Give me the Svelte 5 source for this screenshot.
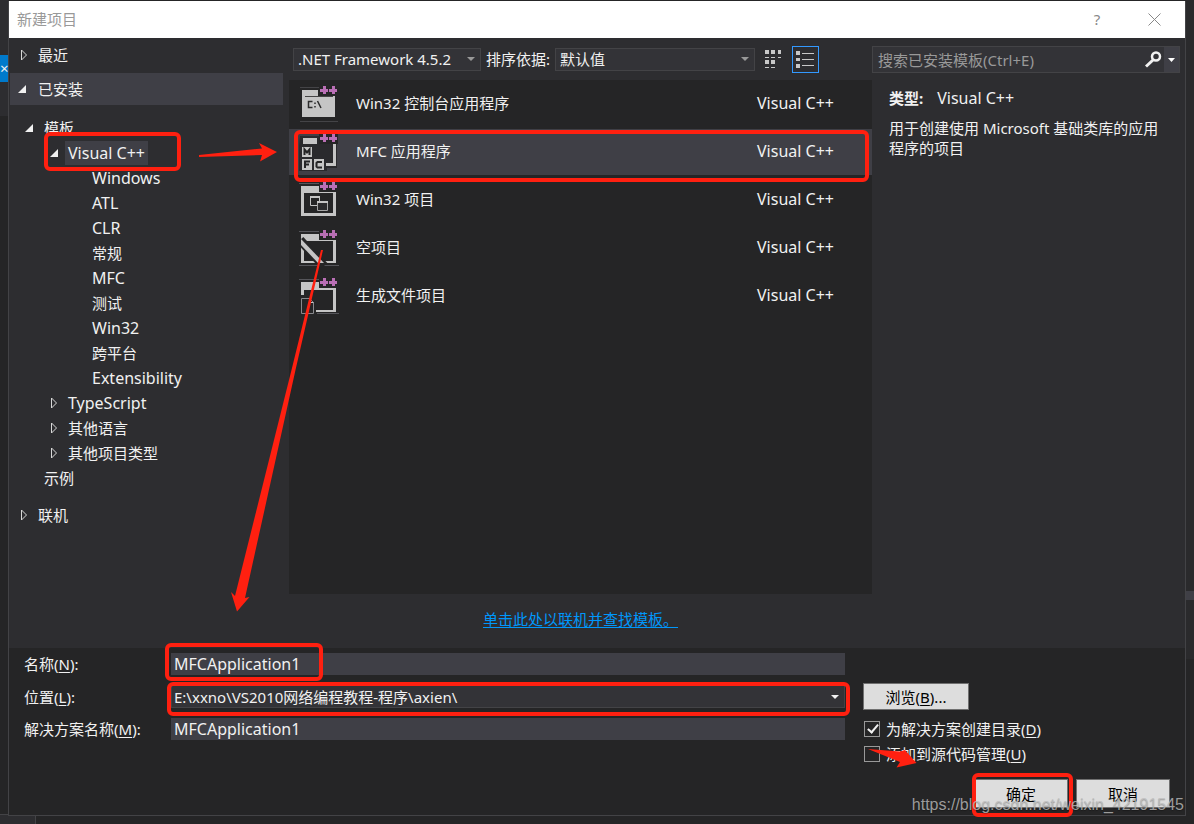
<script>
  const templates = [
    { name: 'Win32 控制台应用程序', icon: 'console' },
    { name: 'MFC 应用程序', icon: 'mfc' },
    { name: 'Win32 项目', icon: 'win32' },
    { name: '空项目', icon: 'empty' },
    { name: '生成文件项目', icon: 'makefile' },
  ];
  const languages = ['Windows', 'ATL', 'CLR', '常规', 'MFC', '测试', 'Win32', '跨平台', 'Extensibility'];
  const others = ['TypeScript', '其他语言', '其他项目类型'];
  const isLatin = (text) => /^[A-Za-z]/.test(text);
  let selected = $state(1);
  let name = $state('MFCApplication1');
  let solution = $state('MFCApplication1');
</script>

{#snippet closed()}
  <svg width="8" height="12" viewBox="0 0 8 12"><path d="M1.500 1v10L6.500 6z" fill="none" stroke="#d8d8d8" /></svg>
{/snippet}
{#snippet opened()}
  <svg width="8" height="12" viewBox="0 0 8 12"><path d="M8 2v8H0z" fill="#f1f1f1" /></svg>
{/snippet}
{#snippet plus()}
  <path d="M20 1h19v11H20z" fill="#252526" />
  <path d="M24 2h3v3h2v3h-2v2h-3V8h-3V5h3zM33 2h3v3h2v3h-2v2h-3V8h-3V5h3z" fill="#b96fb5" />
{/snippet}

<div class="desktop">
  <div class="back-left"><span class="tab">×</span></div>
  <div class="back-right"><span class="bar"></span></div>
  <div class="back-bottom"></div>

  <main class="dialog">
    <header class="title">
      <h1>新建项目</h1>
      <button class="tool help" aria-label="帮助">?</button>
      <button class="tool" aria-label="关闭">
        <svg width="13" height="13" viewBox="0 0 13 13"><path d="M.5.5l12 12M12.500.5l-12 12" stroke="#888" fill="none" /></svg>
      </button>
    </header>

    <section class="upper">
      <nav class="side">
        <button class="group">{@render closed()}最近</button>
        <button class="group on">{@render opened()}已安装</button>
        <ul class="tree">
          <li><button class="n1">{@render opened()}模板</button></li>
          <li><button class="n2">{@render opened()}<span class="picked latin">Visual C++</span></button></li>
          {#each languages as l}
            <li><button class="n3" class:latin={isLatin(l)}>{l}</button></li>
          {/each}
          {#each others as o}
            <li><button class="n2">{@render closed()}<span class:latin={isLatin(o)}>{o}</span></button></li>
          {/each}
          <li><button class="n1 leaf">示例</button></li>
        </ul>
        <button class="group">{@render closed()}联机</button>
      </nav>

      <div class="middle">
        <div class="toolbar">
          <span class="combo framework">
            <select aria-label="框架版本"><option>.NET Framework 4.5.2</option></select>
            <svg width="8" height="4" viewBox="0 0 8 4"><path d="M0 0h8L4 4z" fill="#999" /></svg>
          </span>
          <label for="sort">排序依据:</label>
          <span class="combo sort">
            <select id="sort"><option>默认值</option></select>
            <svg width="8" height="4" viewBox="0 0 8 4"><path d="M0 0h8L4 4z" fill="#999" /></svg>
          </span>
          <button class="view" aria-label="小图标">
            <svg width="17" height="19" viewBox="0 0 17 19" fill="#c8c8c8">
              <path d="M0 0h4v4H0zM6 0h4v4H6zM13 0h3v4h-3zM0 10h4v4H0zM6 10h4v4H6zM0 7h4v1H0zM6 7h4v1H6zM13 7h3v1h-3zM0 17h4v1H0zM6 17h4v1H6z" />
            </svg>
          </button>
          <button class="view active" aria-label="中等图标">
            <svg width="19" height="17" viewBox="0 0 19 17" fill="#c8c8c8">
              <path d="M0 0h4v4H0zM0 7h4v3H0zM0 13h4v4H0zM6 2h12v1H6zM6 8h12v1H6zM6 14h12v1H6z" />
            </svg>
          </button>
        </div>

        <ul class="list">
          {#each templates as t, i}
            <li>
              <button class="item" class:sel={selected === i} onclick={() => (selected = i)}>
                <svg class="ico" width="40" height="40" viewBox="0 0 40 40">
                  {#if t.icon === 'console'}
                    <path d="M1 3.500h20M1 37.500h38" stroke="#444447" />
                    <path d="M3 6h16v6h17v21H3z" fill="#c5c5c5" />
                    <path d="M6 12.500h28" stroke="#444" />
                    <path d="M13.500 17.500H9.500v6h4M16 18.500v1.500M16 22v1.500M18.500 17l3.500 7" fill="none" stroke="#2b2b2b" stroke-width="1.500" />
                  {:else if t.icon === 'mfc'}
                    <path d="M1 4h37v32H28v3H0V14z" fill="#2a2a2d" />
                    <path d="M4 6h14v6H4z" fill="#c5c5c5" />
                    <path d="M34 12h3v22H27v-3h7z" fill="#c5c5c5" />
                    <path d="M3 15h10v10H3zM3 27h10v11H3zM15 27h10v11H15z" fill="#c5c5c5" />
                    <path d="M5.500 23v-5.500L8 20.500l2.500-3V23M6 36v-6.500h5M6 32.500h4M23 30h-4.500l-1 1v3.500l1 1H23" fill="none" stroke="#252526" stroke-width="2" />
                  {:else if t.icon === 'win32'}
                    <path d="M0 3.500h20" stroke="#55555a" />
                    <path d="M2 6h18v6h17v24H2zM5 13v20h29V13z" fill="#c5c5c5" fill-rule="evenodd" />
                    <path d="M11.500 17.500h9v8h-9z" fill="none" stroke="#c5c5c5" />
                    <path d="M11 16h10v2H11z" fill="#c5c5c5" />
                    <path d="M18.500 21.500h10v9h-10z" fill="#2b2b2d" stroke="#a5a5a5" />
                    <path d="M18 21h11v2H18z" fill="#c5c5c5" />
                  {:else if t.icon === 'empty'}
                    <path d="M0 3.500h20M0 37.500h40" stroke="#55555a" />
                    <path d="M2 6h18v6h17v23H2zM5 13v20h29V13z" fill="#c5c5c5" fill-rule="evenodd" />
                    <path d="M1 12l24 26" stroke="#252526" stroke-width="9" />
                    <path d="M2 11v6l17 18h6z" fill="#c5c5c5" />
                  {:else}
                    <path d="M0 3.500h20M18 37.500h22" stroke="#55555a" />
                    <path d="M2 6h18v6h17v24H17v-2h17V14H5v5H2z" fill="#c5c5c5" />
                    <path d="M2.500 22.500h8l4 4v11h-12z" fill="#252526" stroke="#88888c" />
                    <path d="M10.500 22.500v4h4" fill="none" stroke="#c5c5c5" />
                  {/if}
                  {@render plus()}
                </svg>
                <span class="label">{t.name}</span>
                <span class="lang latin">Visual C++</span>
              </button>
            </li>
          {/each}
        </ul>
        <p class="online"><a href="#online">单击此处以联机并查找模板。</a></p>
      </div>

      <aside class="details">
        <div class="search">
          <input type="text" aria-label="搜索" placeholder="搜索已安装模板(Ctrl+E)" />
          <button class="find" aria-label="开始搜索">
            <svg width="17" height="17" viewBox="0 0 17 17"><circle cx="11" cy="5.500" r="4" fill="none" stroke="#f1f1f1" stroke-width="2.500" /><path d="M8 9l-7 6.500" stroke="#f1f1f1" stroke-width="3" /></svg>
          </button>
          <button class="drop" aria-label="搜索选项">
            <svg width="7" height="4" viewBox="0 0 7 4"><path d="M0 0h7L3.500 4z" fill="#fff" /></svg>
          </button>
        </div>
        <p><strong>类型:</strong><span class="latin">Visual C++</span></p>
        <p>用于创建使用 Microsoft 基础类库的应用程序的项目</p>
      </aside>
    </section>

    <form class="lower" onsubmit={(e) => e.preventDefault()}>
      <div class="fields">
        <label for="name">名称(<u>N</u>):</label>
        <input id="name" class="box latin" type="text" bind:value={name} />
        <span></span>
        <label for="place">位置(<u>L</u>):</label>
        <span class="combo place">
          <select id="place"><option>E:\xxno\VS2010网络编程教程-程序\axien\</option></select>
          <svg width="8" height="4" viewBox="0 0 8 4"><path d="M0 0h8L4 4z" fill="#f1f1f1" /></svg>
        </span>
        <button class="push browse" type="button">浏览(<u>B</u>)...</button>
        <label for="solution">解决方案名称(<u>M</u>):</label>
        <input id="solution" class="box latin" type="text" bind:value={solution} />
        <label class="check"><input type="checkbox" checked />为解决方案创建目录(<u>D</u>)</label>
        <label class="check last"><input type="checkbox" />添加到源代码管理(<u>U</u>)</label>
      </div>
      <div class="actions">
        <button class="push" type="submit">确定</button>
        <button class="push" type="button">取消</button>
      </div>
    </form>
  </main>

  <svg class="marks" aria-hidden="true">
    <g fill="none" stroke="#ff2010" stroke-width="4">
      <rect x="46" y="134" width="133" height="35" rx="4" />
      <rect x="296" y="132" width="571" height="48" rx="4" />
      <rect x="167" y="645" width="154" height="34" rx="4" />
      <rect x="169" y="684" width="679" height="30" rx="4" />
      <rect x="974" y="775" width="97" height="40" rx="4" />
    </g>
    <g fill="#ff2010">
      <path d="M199 155L262 148.500 259 143 277 152 260 161.500 262 155 199 157z" />
      <path d="M321 250L323 250 295.500 370 245 598 249.500 597 237 611.500 231 592 235 596 291.500 370z" />
      <path d="M868 749L900 751.500 905 750 916.500 763 896.500 767.500 900 762z" />
    </g>
  </svg>
  <span class="watermark">https://blog.csdn.net/weixin_42191545</span>
</div>

<style>
  :global(body) { margin: 0; background: #252526; }
  .desktop, .desktop * { box-sizing: border-box; }
  .desktop {
    position: relative;
    display: flex;
    min-height: 100vh;
    padding: 1px 8px 8px;
    background: #252526;
    color: #f1f1f1;
    font: 15px/20px "Noto Sans", "Noto Sans CJK SC", sans-serif;
    overflow: hidden;
  }
  button, input, select { font: inherit; color: inherit; border: 0; margin: 0; padding: 0; background: none; }
  ul { list-style: none; margin: 0; padding: 0; }
  svg { display: block; flex: none; }
  .desktop .latin { font-size: 16px; }
  .back-left { position: absolute; left: 0; top: 0; width: 8px; height: 116px; background: #2d2d30; }
  .tab { position: absolute; top: 55px; left: 0; width: 8px; height: 27px; overflow: hidden; background: #007acc; line-height: 27px; }
  .back-right { position: absolute; right: 0; top: 0; width: 8px; height: 659px; background: #2a2a2c; }
  .bar { position: absolute; top: 591px; left: 0; width: 8px; height: 9px; background: #3f3f46; }
  .back-bottom { position: absolute; left: 0; bottom: 0; width: 36px; height: 10px; background: #2d2d30; border: solid #434346; border-width: 1px 1px 0 0; }

  .dialog { position: relative; flex: 1; min-width: 0; display: flex; flex-direction: column; border: 1px solid #434346; border-top: 0; background: #2d2d30; }
  .title { display: flex; align-items: center; height: 37px; padding-left: 8px; background: #fff; color: #999; }
  h1 { flex: 1; margin: 0; padding-bottom: 2px; font: inherit; }
  .tool { display: flex; align-items: center; justify-content: center; width: 61px; height: 37px; color: #888; }
  .help { width: 54px; padding-bottom: 2px; }

  .upper { flex: 1; display: grid; grid-template-columns: 280px minmax(0, 1fr) 308px; padding-right: 5px; }
  .side { padding-right: 6px; }
  .side button { display: flex; align-items: center; width: 100%; text-align: left; white-space: nowrap; }
  .side .group { height: 35px; padding: 0 0 2px 11px; gap: 10px; }
  .side .group.on { height: 32px; margin-left: 1px; padding: 0 0 0 8px; gap: 12px; background: #3f3f46; width: 273px; }
  .tree { padding: 10px 0 8px; }
  .tree button { height: 25px; }
  .n1 { padding-left: 16px; gap: 11px; }
  .leaf { padding-left: 35px; }
  .n2 { padding-left: 41px; gap: 7px; }
  .n2 span { padding: 2px 3px; }
  .picked { background: #3f3f46; }
  .n3 { padding-left: 83px; }

  .middle { display: flex; flex-direction: column; }
  .toolbar { display: flex; align-items: center; height: 42px; padding-left: 4px; gap: 5px; white-space: nowrap; }
  .combo { display: flex; align-items: center; position: relative; height: 23px; border: 1px solid #434346; background: #333337; }
  .combo select { width: 100%; height: 21px; padding-left: 4px; appearance: none; outline: 0; }
  .combo svg { position: absolute; right: 5px; pointer-events: none; }
  .framework { width: 188px; }
  .sort { width: 200px; }
  .view { display: flex; align-items: center; justify-content: center; width: 27px; height: 27px; }
  .view.active { border: 1px solid #3399ff; }
  .list { flex: 1; padding: 1px 0; background: #252526; }
  .item { display: flex; align-items: center; width: 100%; height: 46px; margin-bottom: 2px; padding: 0 0 2px 10px; text-align: left; }
  .item.sel { background: #3f3f46; }
  .ico { margin: 2px 17px 0 0; }
  .label { flex: 1; }
  .lang { width: 115px; }
  .online { margin: 0; height: 54px; line-height: 50px; text-align: center; }
  a { color: #0097fb; text-underline-offset: 2px; }

  .search { display: flex; height: 27px; margin: 8px 0 15px; border: 1px solid #434346; background: #333337; }
  .search input { flex: 1; min-width: 0; padding-left: 5px; outline: 0; }
  .search input::placeholder { color: #999; opacity: 1; }
  .find { width: 22px; display: flex; align-items: center; justify-content: center; }
  .drop { width: 15px; display: flex; align-items: center; justify-content: center; background: #3f3f46; }
  .details p { margin: 0 16px 10px 17px; }
  strong { margin-right: 14px; }

  .lower { background: #252526; }
  .fields { display: grid; grid-template-columns: 147px minmax(0, 1fr) 340px; grid-template-rows: 32px 33px 32px 18px; align-items: center; padding-left: 15px; }
  .box { height: 22px; padding: 0 3px; background: #3f3f46; outline: 0; }
  .place select { padding-left: 2px; }
  .push { height: 29px; width: 94px; border: 1px solid #707070; background: #ddd; color: #000; }
  .browse { width: 106px; height: 27px; margin-left: 18px; }
  .check { display: flex; align-items: center; margin-left: 19px; white-space: nowrap; }
  .last { grid-column: 3; }
  .check input { appearance: none; width: 16px; height: 16px; margin-right: 6px; border: 1px solid #999; position: relative; }
  .check input:checked::after { content: ""; position: absolute; left: 5px; top: 0; width: 6px; height: 11px; border: solid #f1f1f1; border-width: 0 2px 2px 0; transform: rotate(40deg); box-sizing: border-box; }
  .actions { display: flex; justify-content: flex-end; gap: 8px; padding: 16px 15px 7px; }
  u { text-underline-offset: 2px; }

  .marks { position: absolute; left: 0; top: 0; width: 100%; height: 100%; pointer-events: none; }
  .watermark { position: absolute; right: 10px; bottom: 9px; font: 16px/20px "Liberation Sans", sans-serif; color: rgba(190, 190, 190, 0.8); text-shadow: 0 1px 1px rgba(0, 0, 0, 0.3); pointer-events: none; }
</style>
